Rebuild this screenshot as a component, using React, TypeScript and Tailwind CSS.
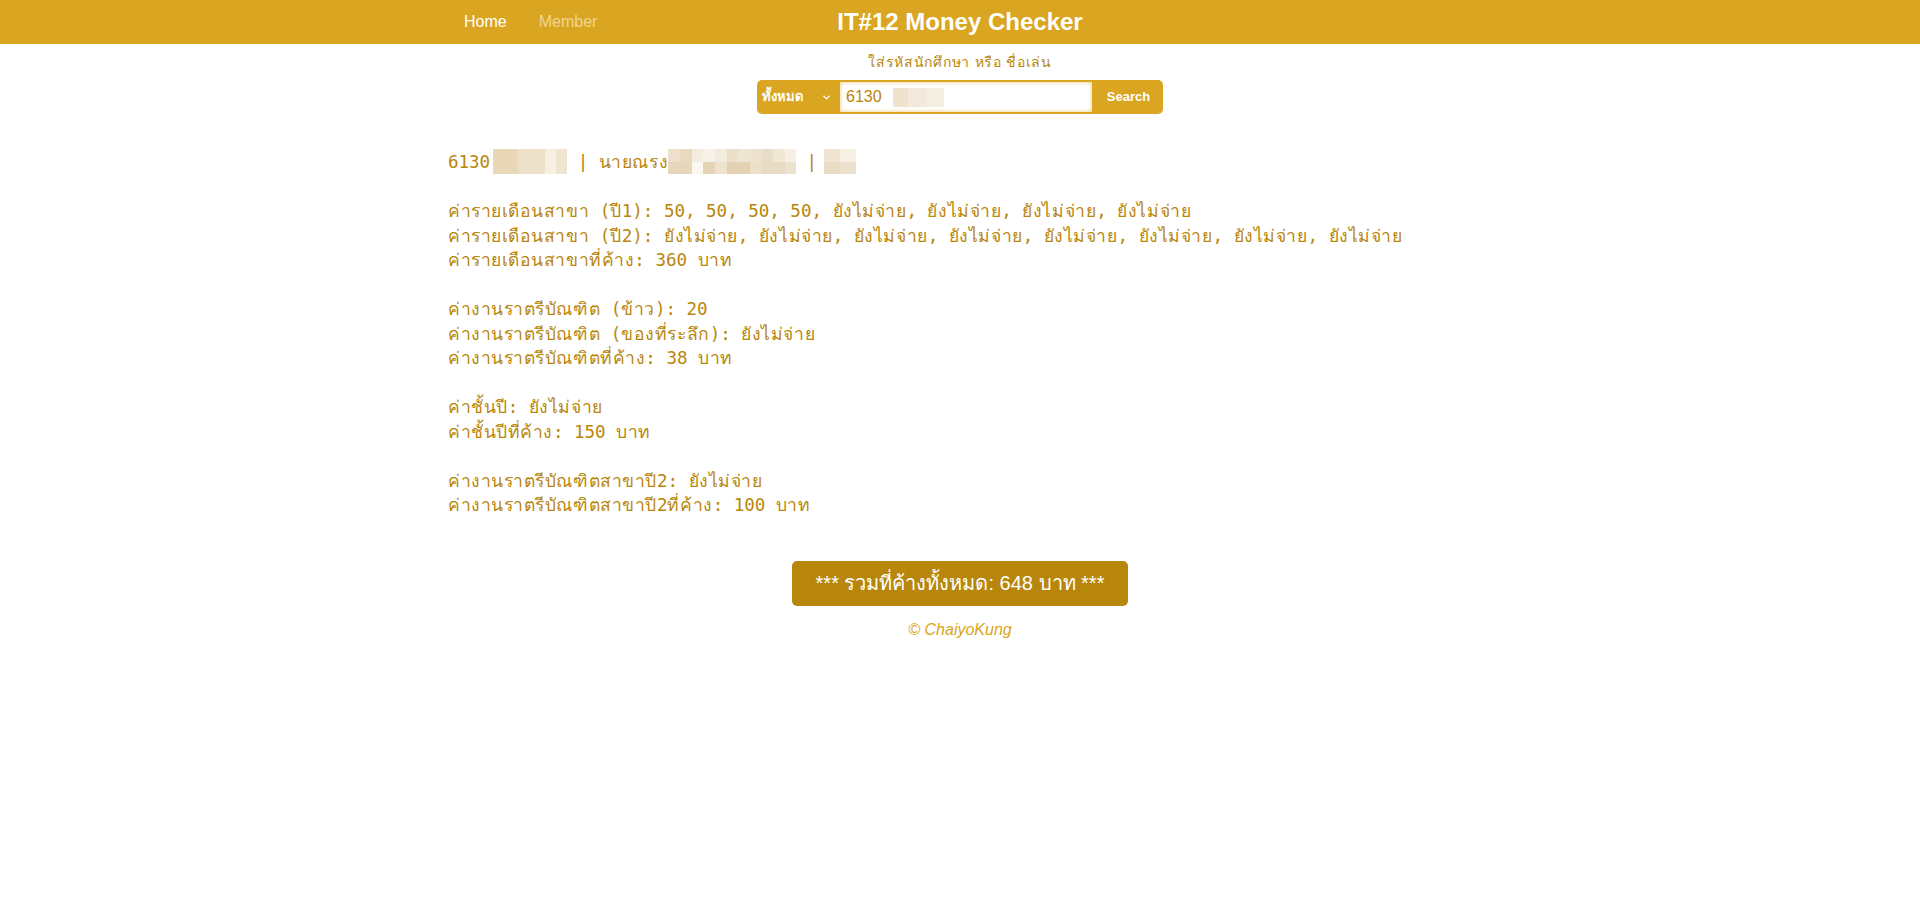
import React from "react"
import { ChevronDown } from "lucide-react"

// Thai falls back to a narrower font here, so widen the Thai runs a little
const T = ({ s }: { s: string }) => (
  <>
    {s.split(/([\u0E00-\u0E7F]+)/).map((part, i) =>
      /[\u0E00-\u0E7F]/.test(part) ? (
        <span key={i} className="tracking-[0.55px]">
          {part}
        </span>
      ) : (
        <React.Fragment key={i}>{part}</React.Fragment>
      )
    )}
  </>
)

type Cell = [string, number]

const Blur = ({ rows, h, className = "" }: { rows: Cell[][]; h: number; className?: string }) => (
  <span className={"inline-flex flex-col align-middle -mt-[3px] " + className}>
    {rows.map((r, i) => (
      <span key={i} className="flex">
        {r.map(([c, w], j) => (
          <span key={j} className="block" style={{ backgroundColor: c, width: w, height: h }} />
        ))}
      </span>
    ))}
  </span>
)

const lines: string[][] = [
  [
    "ค่ารายเดือนสาขา (ปี1): 50, 50, 50, 50, ยังไม่จ่าย, ยังไม่จ่าย, ยังไม่จ่าย, ยังไม่จ่าย",
    "ค่ารายเดือนสาขา (ปี2): ยังไม่จ่าย, ยังไม่จ่าย, ยังไม่จ่าย, ยังไม่จ่าย, ยังไม่จ่าย, ยังไม่จ่าย, ยังไม่จ่าย, ยังไม่จ่าย",
    "ค่ารายเดือนสาขาที่ค้าง: 360 บาท",
  ],
  [
    "ค่างานราตรีบัณฑิต (ข้าว): 20",
    "ค่างานราตรีบัณฑิต (ของที่ระลึก): ยังไม่จ่าย",
    "ค่างานราตรีบัณฑิตที่ค้าง: 38 บาท",
  ],
  ["ค่าชั้นปี: ยังไม่จ่าย", "ค่าชั้นปีที่ค้าง: 150 บาท"],
  ["ค่างานราตรีบัณฑิตสาขาปี2: ยังไม่จ่าย", "ค่างานราตรีบัณฑิตสาขาปี2ที่ค้าง: 100 บาท"],
]

export default function App() {
  return (
    <div className="min-h-screen bg-white font-['Liberation_Sans',Arial,sans-serif]">
      <nav className="h-[44px] bg-[#DAA520]">
        <div className="mx-auto grid h-full w-[1024px] grid-cols-3 items-center">
          <div className="flex text-[16px]">
            <a className="px-4 text-white">Home</a>
            <a className="px-4 text-[#f1d591]">Member</a>
          </div>
          <h1 className="text-center text-[24px] font-bold text-white">IT#12 Money Checker</h1>
          <div />
        </div>
      </nav>

      <div className="mt-2 flex flex-col items-center">
        <label className="text-[14px] leading-5 tracking-[0.7px] text-[#B8860B]">ใส่รหัสนักศึกษา หรือ ชื่อเล่น</label>
        <form className="mt-2 flex h-[34px] w-[406px] overflow-hidden rounded-[5px] bg-[#DAA520]">
          <div className="flex w-[81px] items-center justify-between pl-[5px] pr-[6px] text-[13px] font-bold text-white">
            <span>ทั้งหมด</span>
            <ChevronDown className="h-[11px] w-[11px]" strokeWidth={3} />
          </div>
          <div className="flex w-[256px] items-center border-2 border-[#DAA520] bg-white pl-[6px] shadow-[inset_0_0_4px_rgba(218,165,32,0.6)]">
            <span className="text-[16px] text-[#B8860B]">6130</span>
            <span className="ml-[11px] flex h-[19px]">
              <span className="block w-[15px] bg-[#efe3cd]" />
              <span className="block w-[18px] bg-[#f2e9da]" />
              <span className="block w-[18px] bg-[#f4ede2]" />
            </span>
          </div>
          <button type="button" className="flex-1 text-[13px] font-bold text-white">
            Search
          </button>
        </form>
      </div>

      <div className="mx-auto mt-[36px] w-[1024px] font-['DejaVu_Sans_Mono',monospace] text-[17.5px] leading-[24.5px] text-[#B8860B]">
        <div className="whitespace-pre">
          6130
          <Blur
            className="ml-[3px]"
            h={25}
            rows={[[["#e9d8b8", 25], ["#ede0c8", 27], ["#f7f0e2", 11], ["#efe4d0", 11]]]}
          />
          {" | "}
          <T s="นายณรง" />
          <Blur
            h={12.5}
            rows={[
              [["#ece0cc", 12], ["#e8d9bf", 12], ["#f3ece0", 11], ["#f7f2ea", 12], ["#f3ebdd", 12], ["#ecdfc8", 11], ["#efe5d3", 12], ["#eee3cf", 12], ["#e9ddc8", 11], ["#f1e7d5", 12], ["#f6efe4", 11]],
              [["#e6d6ba", 12], ["#e6d6ba", 12], ["#fbf8f2", 11], ["#e4d3b5", 12], ["#eee3cf", 12], ["#e3d1b1", 11], ["#e3d1b1", 12], ["#ece0cb", 12], ["#e8dbc3", 11], ["#e8dbc3", 12], ["#ece1cd", 11]],
            ]}
          />
          {" | "}
          <Blur
            className="-ml-[4px]"
            h={12.5}
            rows={[
              [["#efe4d2", 16], ["#f6efe3", 16]],
              [["#e9dcc5", 16], ["#ece1cd", 16]],
            ]}
          />
        </div>
        {lines.map((p, i) => (
          <div key={i} className="mt-[24.5px]">
            {p.map((l) => (
              <div key={l} className="whitespace-pre">
                <T s={l} />
              </div>
            ))}
          </div>
        ))}
      </div>

      <div className="mt-[43px] flex flex-col items-center">
        <div className="flex h-[45px] w-[336px] items-center justify-center rounded-[5px] bg-[#B8860B] text-[20px] text-white">
          *** รวมที่ค้างทั้งหมด: 648 บาท ***
        </div>
        <p className="mt-[12px] text-[16px] italic text-[#DAA520]">© ChaiyoKung</p>
      </div>
    </div>
  )
}
